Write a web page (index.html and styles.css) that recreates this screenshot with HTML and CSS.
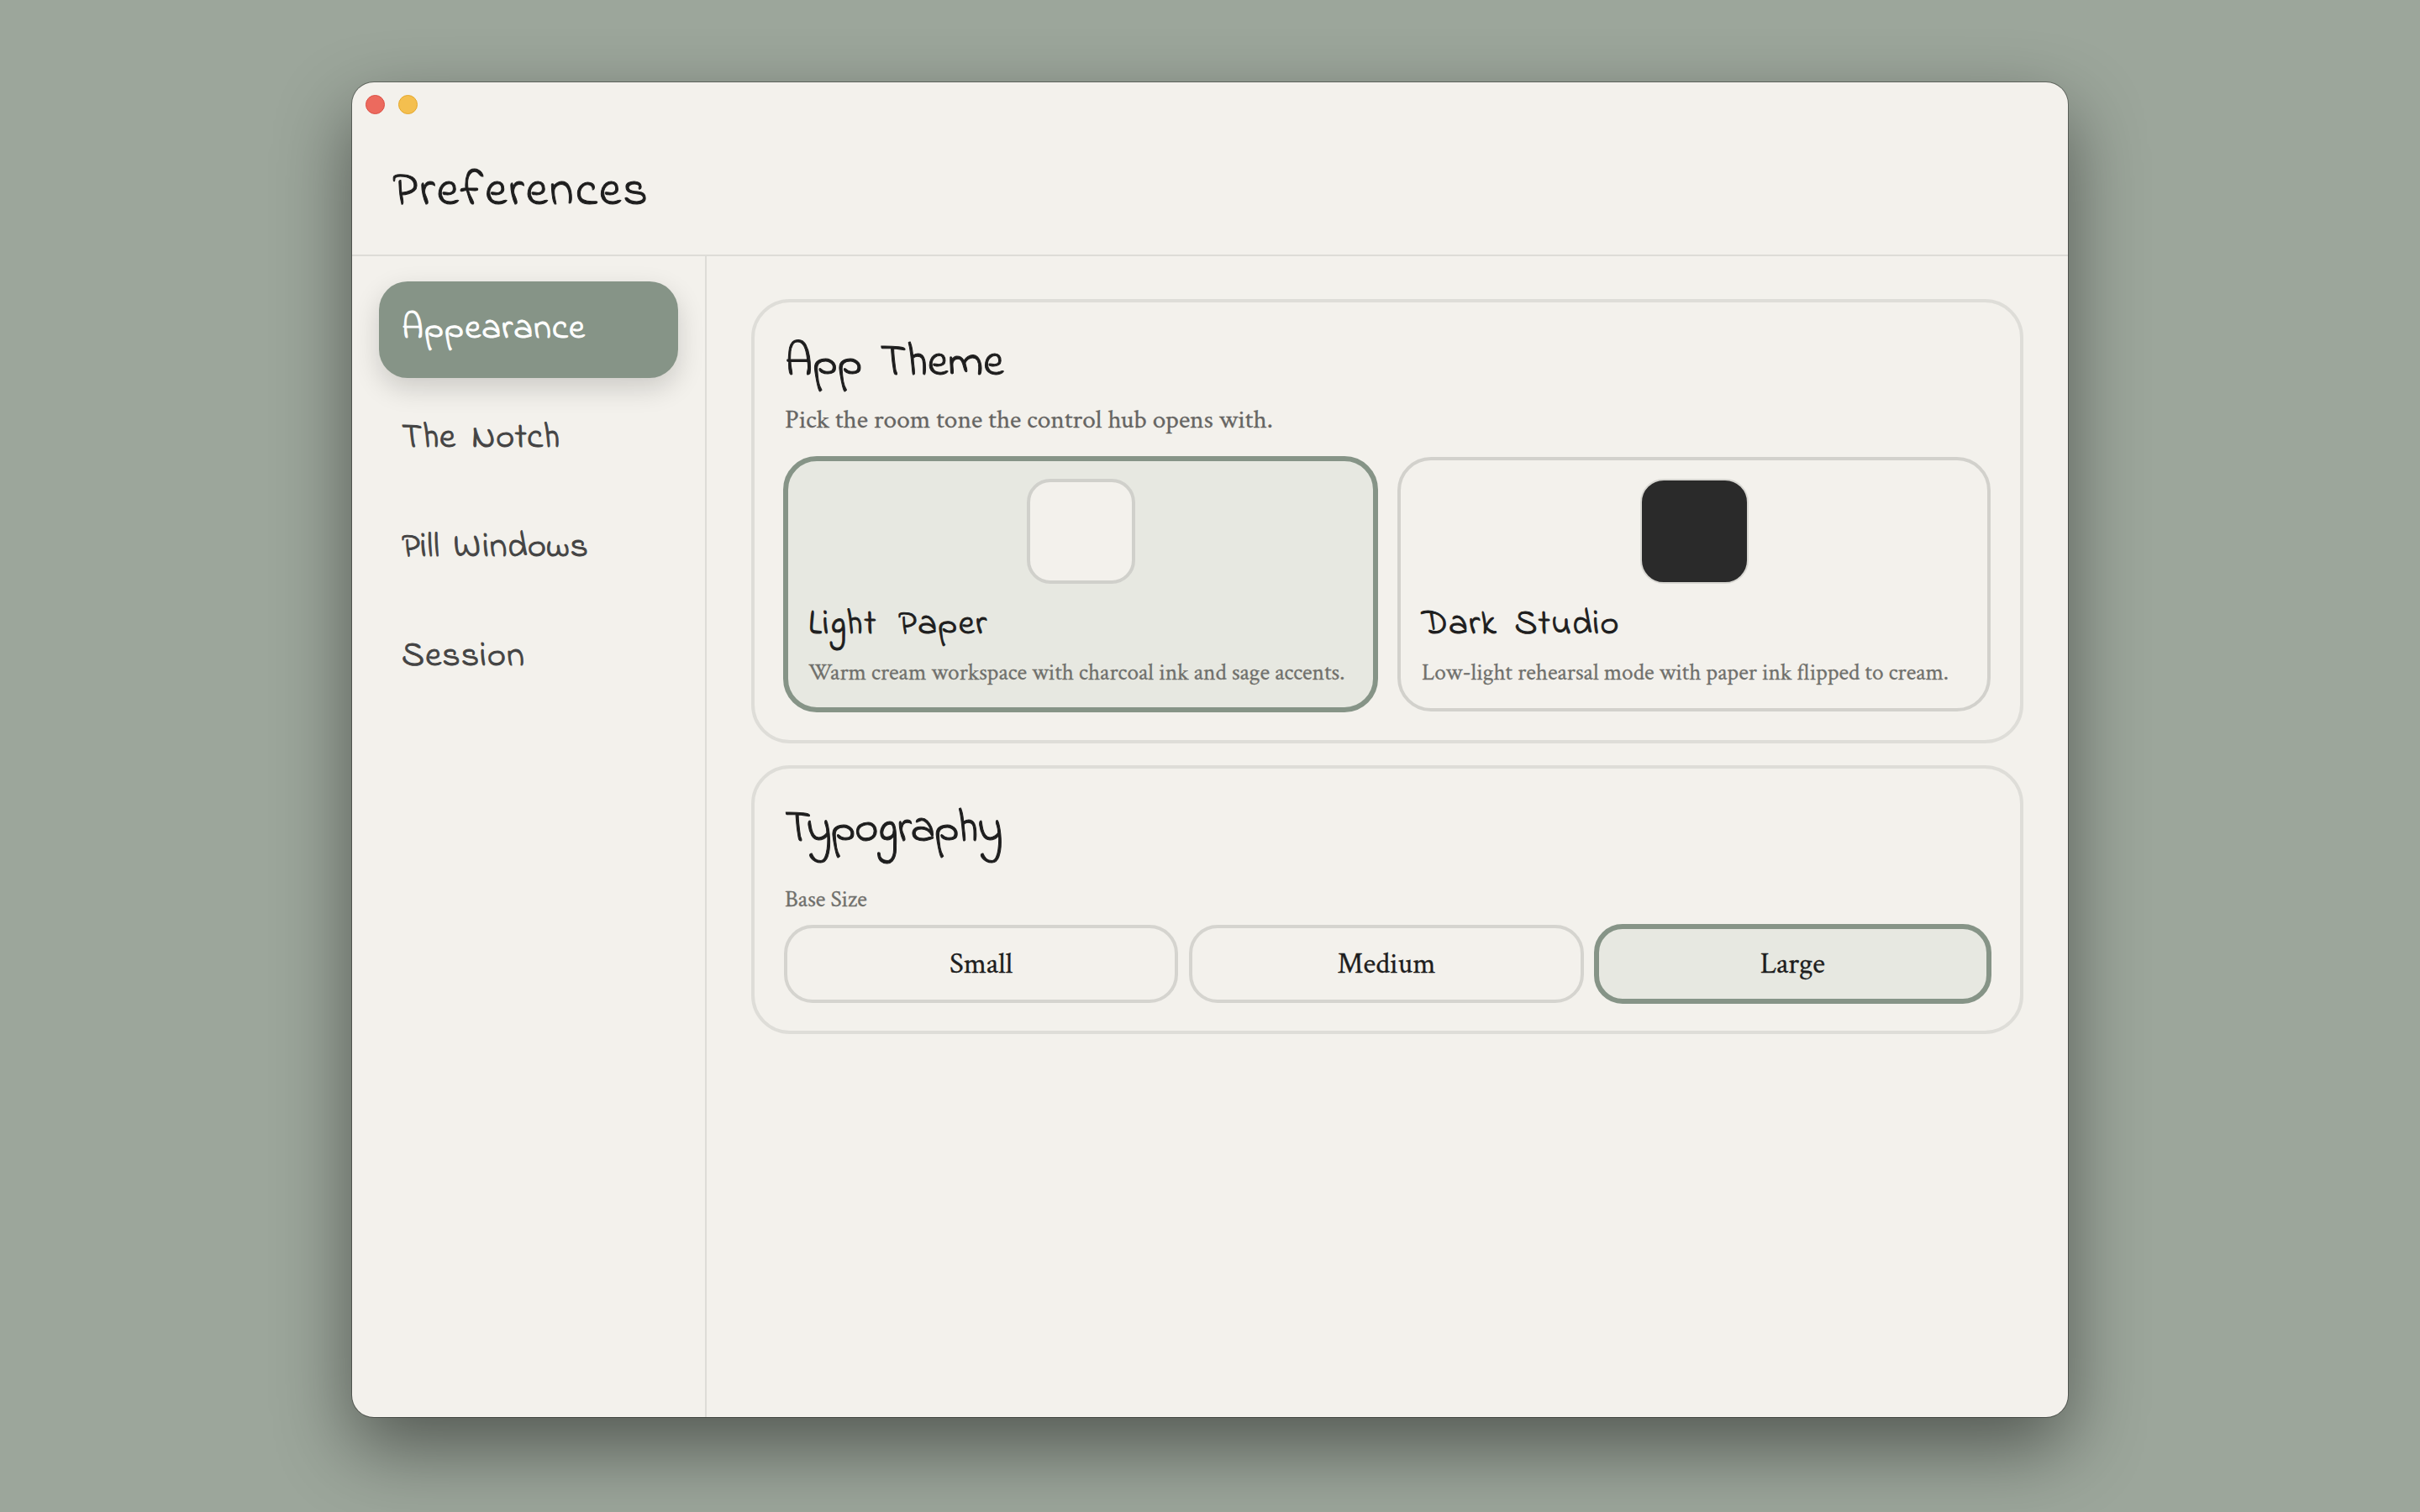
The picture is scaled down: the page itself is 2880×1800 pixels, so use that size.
FILE: index.html
```html
<!DOCTYPE html>
<html lang="en">
<head>
  <meta charset="UTF-8" />
  <meta name="viewport" content="width=device-width, initial-scale=1.0" />
  <title>Preferences</title>
  <link rel="stylesheet" href="styles.css">
</head>
<body>
  <div class="window">
    <header class="header">
      <div class="lights"><span class="light close"></span><span class="light minimize"></span></div>
      <h1>Preferences</h1>
    </header>
    <div class="layout">
      <nav class="sidebar">
        <a class="nav-item active">Appearance</a>
        <a class="nav-item notch">The Notch</a>
        <a class="nav-item pills">Pill Windows</a>
        <a class="nav-item">Session</a>
      </nav>
      <main class="content">
        <section class="card theme-card">
          <h2>App Theme</h2>
          <p class="hint">Pick the room tone the control hub opens with.</p>
          <div class="themes">
            <div class="theme selected">
              <div class="swatch light-swatch"></div>
              <h3>Light Paper</h3>
              <p>Warm cream workspace with charcoal ink and sage accents.</p>
            </div>
            <div class="theme">
              <div class="swatch dark-swatch"></div>
              <h3 class="dark-title">Dark Studio</h3>
              <p>Low-light rehearsal mode with paper ink flipped to cream.</p>
            </div>
          </div>
        </section>
        <section class="card type-card">
          <h2 class="tight">Typography</h2>
          <p class="label">Base Size</p>
          <div class="sizes">
            <button>Small</button>
            <button>Medium</button>
            <button class="selected">Large</button>
          </div>
        </section>
      </main>
    </div>
  </div>
</body>
</html>
```
FILE: styles.css
```css
* { box-sizing: border-box; }
body { margin: 0; height: 1800px; padding: 98px 0 0 419px; background: #9ca69b; font-family: "Crimson Text", "Liberation Serif", serif; color: #1e1e1e; overflow: hidden; }
h1, h2, h3, p { margin: 0; white-space: nowrap; }
h1, h2, h3, .nav-item { font-family: "Indie Flower", Lato, sans-serif; font-weight: 400; -webkit-text-stroke: 1px currentColor; }
p, button { -webkit-text-stroke: 0.3px currentColor; }

.window { width: 2042px; height: 1589px; display: flex; flex-direction: column; background: #f3f1ec; border-radius: 26px; box-shadow: 0 0 0 1px rgba(0,0,0,0.35), 0 36px 90px rgba(0,0,0,0.47); }

/* title bar */
.header { height: 207px; border-bottom: 2px solid #dddcd7; }
.lights { display: flex; gap: 16px; padding: 15px 16px 0; }
.light { width: 23px; height: 23px; border-radius: 50%; }
.close { background: #ec6a5e; border: 1px solid #dc4f44; }
.minimize { background: #f4bf4f; border: 1px solid #e5a82b; }
h1 { padding: 57px 0 0 48px; font-size: 58px; line-height: 72px; letter-spacing: 2.3px; }

/* sidebar */
.layout { flex: 1; display: flex; }
.sidebar { width: 422px; padding: 30px 32px; border-right: 2px solid #dddcd7; display: flex; flex-direction: column; gap: 16px; }
.nav-item { height: 114px; padding: 0 27px; border-radius: 34px; font-size: 42px; line-height: 114px; letter-spacing: 1.2px; color: #444; white-space: nowrap; }
.nav-item.active { height: 115px; margin-bottom: -1px; background: #869487; color: #fff; box-shadow: 0 12px 32px rgba(0,0,0,0.16); }
.nav-item.notch { letter-spacing: 0.5px; word-spacing: 8px; }
.nav-item.pills { letter-spacing: 0.5px; word-spacing: 5px; }

/* content */
.content { flex: 1; padding: 51px 53px; display: flex; flex-direction: column; gap: 26px; }
.card { border: 4px solid #deddd8; border-radius: 46px; padding: 36px 35px; }
.theme-card { height: 529px; }
.type-card { height: 320px; }
h2 { margin: 1px 0 0 1px; font-size: 54px; line-height: 72px; word-spacing: 8px; }
h2.tight { letter-spacing: -0.9px; }
.hint { margin: 13px 0 0 1px; font-size: 31.35px; line-height: 36px; color: #666563; }

.themes { display: flex; gap: 24px; margin-top: 25px; height: 305px; }
.theme { flex: 1; margin: 1px 0; border: 4px solid #d2d1cc; border-radius: 40px; padding: 22px 25px; }
.theme.selected { margin: 0 -1px; border: 6px solid #869487; background: #e7e8e1; padding: 21px 24px; }
.swatch { width: 129px; height: 125px; margin: 0 auto; border-radius: 28px; }
.light-swatch { background: #f3f1ec; border: 4px solid #d0d0cb; }
.dark-swatch { background: #2a2a2a; border: 2px solid #d8d7d2; }
h3 { margin-top: 21px; font-size: 42px; line-height: 56px; letter-spacing: 1.5px; word-spacing: 13px; }
h3.dark-title { letter-spacing: 1.2px; word-spacing: 9px; }
.theme p, .label { font-size: 27.4px; line-height: 32px; color: #70706c; }
.theme p { margin-top: 13px; }

.label { margin: 31px 0 0 1px; }
.sizes { display: flex; gap: 13px; margin-top: 13px; height: 95px; }
button { flex: 1; margin: 1px 0; padding: 0; border: 4px solid #d5d4cf; border-radius: 34px; background: none; font-family: inherit; font-size: 34.8px; color: #1e1e1e; }
button.selected { margin: 0 -1px; border: 6px solid #869487; background: #e7e8e1; }
```
